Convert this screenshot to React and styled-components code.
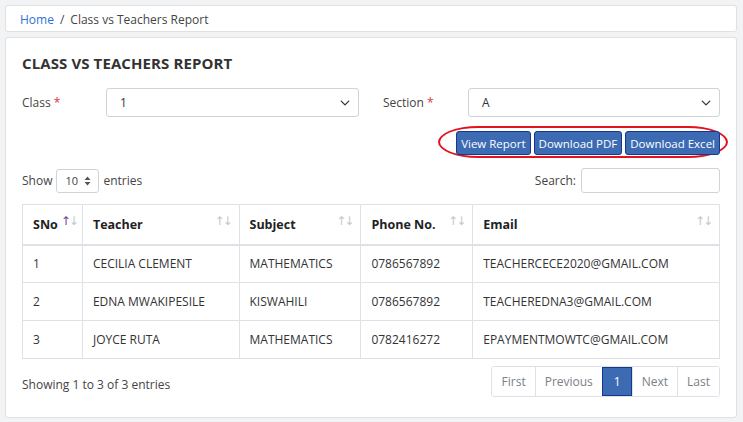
import React from 'react';
import styled, { createGlobalStyle } from 'styled-components';

const GlobalStyle = createGlobalStyle`
  html, body {
    margin: 0;
    background: #f2f3f5;
    font-family: 'Open Sans', 'Liberation Sans', sans-serif;
    color: #212529;
  }
  * { box-sizing: border-box; }
`;

const Page = styled.div`
  padding: 5px 6px 5px 5px;
`;

const Card = styled.div`
  background: #fff;
  border: 1px solid #dfe1e5;
  border-radius: 3px;
`;

const Breadcrumb = styled(Card)`
  height: 27px;
  display: flex;
  align-items: center;
  padding-left: 14px;
  padding-top: 1px;
  font-size: 12px;
  color: #444;
  gap: 6px;
`;

const Crumb = styled.span`
  color: ${(p) => (p.link ? '#2f6fdc' : '#444')};
`;

const Main = styled(Card)`
  margin-top: 5px;
  padding: 14px 16px 20px 16px;
`;

const Title = styled.h1`
  margin: 0;
  font-size: 15px;
  font-weight: 700;
  color: #333;
  letter-spacing: 0.1px;
  line-height: 22px;
`;

const FormGrid = styled.div`
  display: grid;
  grid-template-columns: 1fr 1fr;
  column-gap: 24px;
  margin-top: 14px;
`;

const Field = styled.div`
  display: flex;
  align-items: center;
`;

const Label = styled.label`
  width: ${(p) => p.w}px;
  font-size: 12px;
  color: #444;
`;

const Req = styled.span`
  color: #e0313c;
`;

const SelectBox = styled.div`
  flex: 1;
  height: 29px;
  border: 1px solid #ced4da;
  border-radius: 3px;
  display: flex;
  align-items: center;
  justify-content: space-between;
  padding: 0 8px 0 13px;
  font-size: 12px;
  color: #333;
`;

const ButtonRow = styled.div`
  display: flex;
  justify-content: flex-end;
  margin-top: 9px;
  margin-right: -8px;
`;

const Highlight = styled.div`
  display: flex;
  gap: 3px;
  padding: 3px 6px 1px 16px;
  border: 2px solid #e3121c;
  border-radius: 40px / 16px;
`;

const Btn = styled.button`
  height: 24px;
  padding: 0 4px;
  background: #3c6bb3;
  border: 1px solid #16378a;
  border-radius: 3px;
  color: #fff;
  font-family: inherit;
  font-size: 11.5px;
`;

const Controls = styled.div`
  display: flex;
  justify-content: space-between;
  align-items: center;
  margin-top: 10px;
  font-size: 12px;
  color: #444;
`;

const Inline = styled.div`
  display: flex;
  align-items: center;
  gap: ${(p) => p.gap || 4}px;
`;

const SmallSelect = styled.div`
  width: 43px;
  height: 24px;
  border: 1px solid #ced4da;
  border-radius: 3px;
  display: flex;
  align-items: center;
  justify-content: space-between;
  padding: 0 7px 0 8px;
  font-size: 11px;
`;

const SearchInput = styled.input`
  width: 139px;
  height: 25px;
  border: 1px solid #ced4da;
  border-radius: 3px;
`;

const Table = styled.table`
  width: 100%;
  border-collapse: collapse;
  margin-top: 11px;
  font-size: 12px;
  border: 1px solid #dee2e6;
`;

const Th = styled.th`
  position: relative;
  width: ${(p) => p.w}px;
  height: 40px;
  text-align: left;
  padding: 0 10px;
  font-size: 12.5px;
  font-weight: 700;
  color: #222;
  border: 1px solid #dee2e6;
  border-bottom: 2px solid #dee2e6;
`;

const Sort = styled.span`
  position: absolute;
  right: ${(p) => p.r || 8}px;
  top: 9px;
  font-size: 12px;
  font-weight: 400;
  letter-spacing: -2px;
  color: #c4c7cc;
  font-family: 'DejaVu Sans', sans-serif;
`;

const Up = styled.span`
  color: ${(p) => (p.active ? '#6a4aa6' : '#c4c7cc')};
`;

const Td = styled.td`
  height: 38px;
  padding: 0 10px;
  border: 1px solid #dee2e6;
  color: #333;
`;

const Footer = styled.div`
  display: flex;
  justify-content: space-between;
  align-items: center;
  margin-top: 7px;
  font-size: 12px;
  color: #444;
`;

const Info = styled.span`
  padding-top: 6px;
`;

const Pager = styled.div`
  display: flex;
  border: 1px solid #dee2e6;
  border-radius: 3px;
  overflow: hidden;
`;

const PageItem = styled.div`
  height: 29px;
  padding: 0 ${(p) => p.px || 9}px;
  display: flex;
  align-items: center;
  font-size: 12px;
  color: ${(p) => (p.active ? '#fff' : '#7a7f86')};
  background: ${(p) => (p.active ? '#3c6bb3' : '#fff')};
  border-left: 1px solid ${(p) => (p.first ? 'transparent' : '#dee2e6')};
  outline: ${(p) => (p.active ? '1px solid #16378a' : 'none')};
  outline-offset: -1px;
`;

const Chevron = () => (
  <svg width="10" height="10" viewBox="0 0 16 16">
    <path d="M2 5l6 6 6-6" fill="none" stroke="#343a40" strokeWidth="2.2" strokeLinecap="round" strokeLinejoin="round" />
  </svg>
);

const Updown = () => (
  <svg width="7" height="10" viewBox="0 0 7 10">
    <path d="M3.5 0.5L6.5 4H0.5z M3.5 9.5L6.5 6H0.5z" fill="#555" />
  </svg>
);

const rows = [
  ['1', 'CECILIA CLEMENT', 'MATHEMATICS', '0786567892', 'TEACHERCECE2020@GMAIL.COM'],
  ['2', 'EDNA MWAKIPESILE', 'KISWAHILI', '0786567892', 'TEACHEREDNA3@GMAIL.COM'],
  ['3', 'JOYCE RUTA', 'MATHEMATICS', '0782416272', 'EPAYMENTMOWTC@GMAIL.COM'],
];

const cols = [
  { name: 'SNo', w: 60, active: true, r: 5 },
  { name: 'Teacher', w: 157 },
  { name: 'Subject', w: 122 },
  { name: 'Phone No.', w: 112 },
  { name: 'Email', w: 247 },
];

export default function App() {
  return (
    <Page>
      <GlobalStyle />
      <Breadcrumb>
        <Crumb link>Home</Crumb>
        <Crumb>/</Crumb>
        <Crumb>Class vs Teachers Report</Crumb>
      </Breadcrumb>
      <Main>
        <Title>CLASS VS TEACHERS REPORT</Title>
        <FormGrid>
          <Field>
            <Label w={84}>Class <Req>*</Req></Label>
            <SelectBox>1<Chevron /></SelectBox>
          </Field>
          <Field>
            <Label w={85}>Section <Req>*</Req></Label>
            <SelectBox>A<Chevron /></SelectBox>
          </Field>
        </FormGrid>
        <ButtonRow>
          <Highlight>
            <Btn>View Report</Btn>
            <Btn>Download PDF</Btn>
            <Btn>Download Excel</Btn>
          </Highlight>
        </ButtonRow>
        <Controls>
          <Inline gap={4}>
            Show <SmallSelect>10<Updown /></SmallSelect> entries
          </Inline>
          <Inline gap={5}>
            Search: <SearchInput />
          </Inline>
        </Controls>
        <Table>
          <thead>
            <tr>
              {cols.map((c) => (
                <Th key={c.name} w={c.w}>
                  {c.name}
                  <Sort r={c.r}>
                    <Up active={c.active}>↑</Up>↓
                  </Sort>
                </Th>
              ))}
            </tr>
          </thead>
          <tbody>
            {rows.map((r) => (
              <tr key={r[0]}>
                {r.map((v, i) => (
                  <Td key={i}>{v}</Td>
                ))}
              </tr>
            ))}
          </tbody>
        </Table>
        <Footer>
          <Info>Showing 1 to 3 of 3 entries</Info>
          <Pager>
            <PageItem first>First</PageItem>
            <PageItem>Previous</PageItem>
            <PageItem active px={11}>1</PageItem>
            <PageItem>Next</PageItem>
            <PageItem>Last</PageItem>
          </Pager>
        </Footer>
      </Main>
    </Page>
  );
}
